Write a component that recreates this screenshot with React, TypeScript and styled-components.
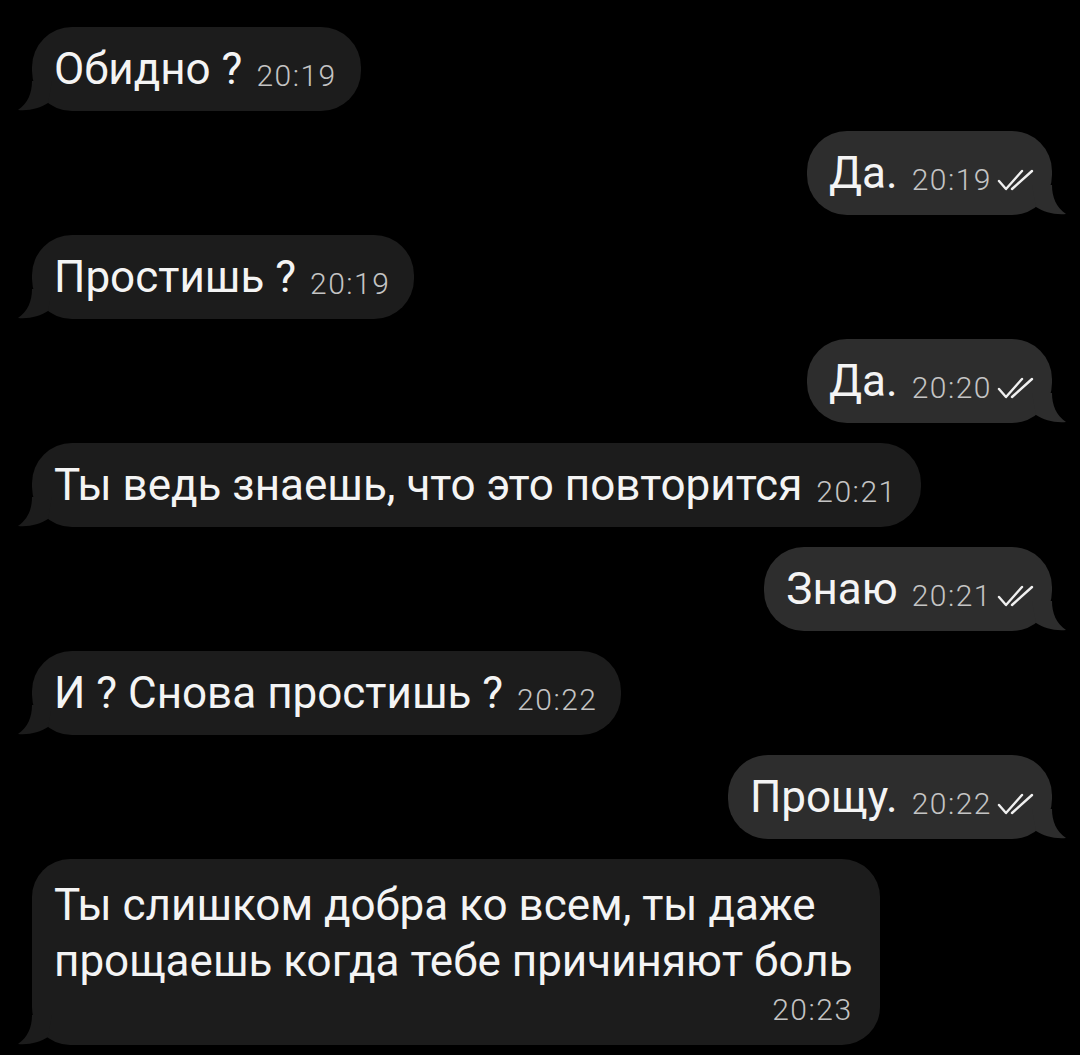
import React from "react";
import styled, { createGlobalStyle } from "styled-components";

const GlobalStyle = createGlobalStyle`
  html, body {
    margin: 0;
    padding: 0;
    background: #000;
  }
  body {
    font-family: Roboto, "Noto Sans", "Liberation Sans", sans-serif;
    -webkit-font-smoothing: antialiased;
  }
`;

const Chat = styled.div`
  display: flex;
  flex-direction: column;
  gap: 20px;
  padding: 27px 28px 0 32px;
  min-height: 1055px;
  box-sizing: border-box;
  background: #000;
`;

const Row = styled.div<{ $out?: boolean }>`
  display: flex;
  justify-content: ${(p) => (p.$out ? "flex-end" : "flex-start")};
`;

const Bubble = styled.div<{ $out?: boolean }>`
  position: relative;
  display: flex;
  align-items: baseline;
  gap: 14px;
  min-height: 52px;
  padding: 16px ${(p) => (p.$out ? "17px" : "24px")} 16px 22px;
  border-radius: 40px;
  background: ${(p) => (p.$out ? "#2d2d2d" : "#1c1c1c")};
  color: #f4f4f4;
`;

const LongBubble = styled(Bubble)`
  flex-direction: column;
  align-items: stretch;
  gap: 0;
  padding: 18px 27px 14px 22px;
  border-radius: 38px;
`;

const Text = styled.span`
  font-size: 44px;
  line-height: 52px;
  white-space: nowrap;
`;

const Paragraph = styled.div`
  font-size: 44px;
  line-height: 56px;
  white-space: nowrap;
`;

const Meta = styled.span`
  display: inline-flex;
  align-items: center;
  gap: 5px;
  position: relative;
  top: 2px;
`;

const Time = styled.span`
  font-size: 30px;
  font-weight: 300;
  letter-spacing: 1.5px;
  color: #c4c4c4;
`;

const FooterTime = styled(Time)`
  align-self: flex-end;
  line-height: 42px;
`;

const TailBox = styled.svg<{ $out?: boolean }>`
  position: absolute;
  bottom: 0;
  width: 34px;
  height: 30px;
  ${(p) => (p.$out ? "right: -14px; transform: scaleX(-1);" : "left: -14px;")}
`;

function Tail({ out }: { out?: boolean }) {
  return (
    <TailBox $out={out} viewBox="0 0 34 30">
      <path
        d="M14 0 C14 12 10 22 0 29 C12 30 22 27 30 22 L34 0 Z"
        fill={out ? "#2d2d2d" : "#1c1c1c"}
      />
    </TailBox>
  );
}

function DoubleCheck() {
  return (
    <svg width="38" height="22" viewBox="0 0 38 22">
      <g
        fill="none"
        stroke="#f0f0f0"
        strokeWidth="2.4"
        strokeLinecap="round"
        strokeLinejoin="round"
      >
        <path d="M2 12 L9 20 L25 2" />
        <path d="M15 20 L35 2" />
      </g>
    </svg>
  );
}

type Msg = { text: string; time: string; out?: boolean };

const messages: Msg[] = [
  { text: "Обидно ?", time: "20:19" },
  { text: "Да.", time: "20:19", out: true },
  { text: "Простишь ?", time: "20:19" },
  { text: "Да.", time: "20:20", out: true },
  { text: "Ты ведь знаешь, что это повторится", time: "20:21" },
  { text: "Знаю", time: "20:21", out: true },
  { text: "И ? Снова простишь ?", time: "20:22" },
  { text: "Прощу.", time: "20:22", out: true },
];

export default function App() {
  return (
    <>
      <GlobalStyle />
      <Chat>
        {messages.map((m, i) => (
          <Row key={i} $out={m.out}>
            <Bubble $out={m.out}>
              <Text>{m.text}</Text>
              <Meta>
                <Time>{m.time}</Time>
                {m.out && <DoubleCheck />}
              </Meta>
              <Tail out={m.out} />
            </Bubble>
          </Row>
        ))}
        <Row>
          <LongBubble>
            <Paragraph>
              Ты слишком добра ко всем, ты даже
              <br />
              прощаешь когда тебе причиняют боль
            </Paragraph>
            <FooterTime>20:23</FooterTime>
            <Tail />
          </LongBubble>
        </Row>
      </Chat>
    </>
  );
}
